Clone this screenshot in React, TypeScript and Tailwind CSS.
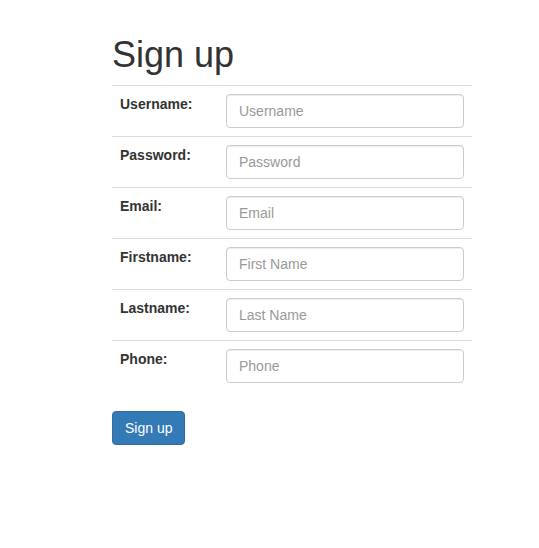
const fields = [
  { label: "Username:", placeholder: "Username", type: "text" },
  { label: "Password:", placeholder: "Password", type: "password" },
  { label: "Email:", placeholder: "Email", type: "email" },
  { label: "Firstname:", placeholder: "First Name", type: "text" },
  { label: "Lastname:", placeholder: "Last Name", type: "text" },
  { label: "Phone:", placeholder: "Phone", type: "text" },
];

export default function App() {
  return (
    <div
      className="min-h-[548px] bg-white pt-[15px] text-[14px] leading-[20px] text-[#333]"
      style={{ fontFamily: '"Liberation Sans", Arial, sans-serif' }}
    >
      <div className="ml-[112px] w-[360px]">
        <h1 className="mt-[20px] mb-[10px] text-[36px] leading-[1.1] font-normal">Sign up</h1>
        <table className="mb-[20px] w-full border-collapse">
          <tbody>
            {fields.map((f) => (
              <tr key={f.label}>
                <td className="w-[106px] border-t border-[#ddd] p-[8px] align-top font-bold">
                  {f.label}
                </td>
                <td className="border-t border-[#ddd] p-[8px] align-top">
                  <input
                    type={f.type}
                    placeholder={f.placeholder}
                    className="block h-[34px] w-full rounded-[4px] border border-[#ccc] bg-white px-[12px] py-[6px] text-[14px] text-[#555] shadow-[inset_0_1px_1px_rgba(0,0,0,0.075)] outline-none placeholder:text-[#999]"
                  />
                </td>
              </tr>
            ))}
          </tbody>
        </table>
        <button
          type="button"
          className="h-[34px] rounded-[4px] border border-[#2e6da4] bg-[#337ab7] px-[12px] py-[6px] text-[14px] text-white"
        >
          Sign up
        </button>
      </div>
    </div>
  );
}
